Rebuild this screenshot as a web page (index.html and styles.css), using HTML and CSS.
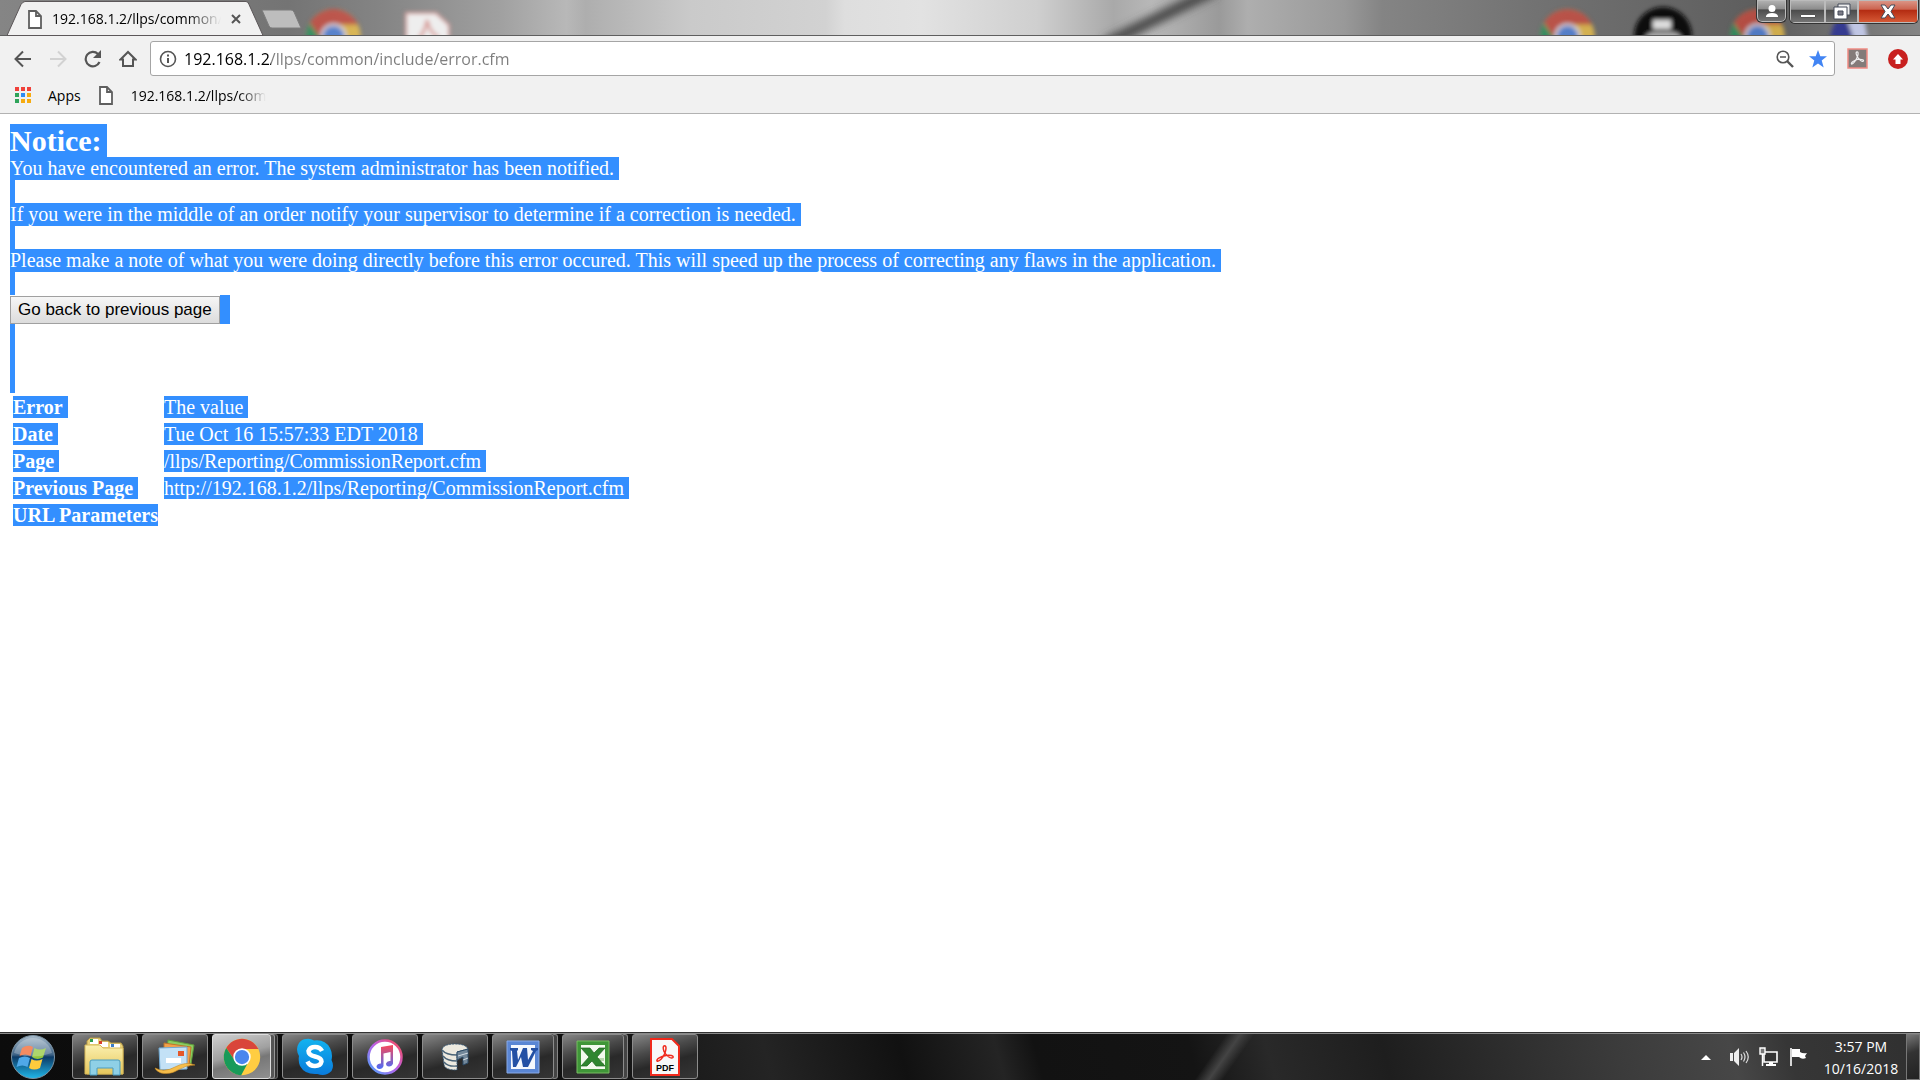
FILE: index.html
```html
<!DOCTYPE html>
<html lang="en">
<head>
    <meta charset="UTF-8">
    <meta name="viewport" content="width=device-width, initial-scale=1.0">
    <title>Error</title>
    <link rel="stylesheet" href="styles.css">
</head>
<body>

    <!-- Shared shapes -->
    <svg width="0" height="0" class="defs">
        <defs>
            <symbol id="page" viewBox="0 0 14 19">
                <path d="M1 1h7l5 5v12H1z M8 1v5h5" fill="#fff" stroke="#5f5f5f" stroke-width="1.8"/>
            </symbol>
            <symbol id="chrome" viewBox="0 0 48 48">
                <circle cx="24" cy="24" r="23" fill="#ffcd42"/>
                <path d="M4.1 12.5A23 23 0 0 1 43.9 12.500L44.800 14H24A10 10 0 0 0 15.300 29z" fill="#d9453a"/>
                <path d="M4.100 12.500A23 23 0 0 0 23 47L32.700 29A10 10 0 0 1 15.300 29z" fill="#189a59"/>
                <circle cx="24" cy="24" r="11" fill="#fff"/>
                <circle cx="24" cy="24" r="9" fill="#4a86ee"/>
            </symbol>
            <linearGradient id="orb" x1="0" y1="0" x2="0" y2="1">
                <stop offset="0" stop-color="#a9bccb"/>
                <stop offset=".45" stop-color="#3c6286"/>
                <stop offset=".5" stop-color="#0c3a66"/>
                <stop offset="1" stop-color="#20b8ea"/>
            </linearGradient>
            <linearGradient id="folder" x1="0" y1="0" x2="0" y2="1">
                <stop offset="0" stop-color="#fbf0ae"/>
                <stop offset="1" stop-color="#e5c65c"/>
            </linearGradient>
            <linearGradient id="sky" x1="0" y1="0" x2="0" y2="1">
                <stop offset="0" stop-color="#12b3f0"/>
                <stop offset="1" stop-color="#0a7bdc"/>
            </linearGradient>
            <linearGradient id="tunes" x1="0" y1="1" x2="1" y2="0">
                <stop offset="0" stop-color="#4aa8ff"/>
                <stop offset=".5" stop-color="#b860e8"/>
                <stop offset="1" stop-color="#ff4a50"/>
            </linearGradient>
            <linearGradient id="note" x1="0" y1="0" x2="0" y2="1">
                <stop offset="0" stop-color="#fa4858"/>
                <stop offset="1" stop-color="#4c6cf8"/>
            </linearGradient>
            <linearGradient id="wall" gradientUnits="userSpaceOnUse" x1="0" y1="0" x2="1920" y2="0">
                <stop offset="0" stop-color="#858585"/>
                <stop offset=".15" stop-color="#747474"/>
                <stop offset=".2" stop-color="#858585"/>
                <stop offset=".26" stop-color="#a0a0a0"/>
                <stop offset=".295" stop-color="#b8b8b8"/>
                <stop offset=".305" stop-color="#aeaeae"/>
                <stop offset=".36" stop-color="#cacaca"/>
                <stop offset=".43" stop-color="#d2d2d2"/>
                <stop offset=".44" stop-color="#dedede"/>
                <stop offset=".48" stop-color="#e2e2e2"/>
                <stop offset=".54" stop-color="#cfcfcf"/>
                <stop offset=".58" stop-color="#a9a9a9"/>
                <stop offset=".6" stop-color="#b8b8b8"/>
                <stop offset=".635" stop-color="#9a9a9a"/>
                <stop offset=".65" stop-color="#aeaeae"/>
                <stop offset=".7" stop-color="#999"/>
                <stop offset=".72" stop-color="#848484"/>
                <stop offset=".8" stop-color="#727272"/>
                <stop offset=".92" stop-color="#5d5d5d"/>
                <stop offset="1" stop-color="#858585"/>
            </linearGradient>
            <filter id="soft" x="-20%" y="-20%" width="140%" height="140%"><feGaussianBlur stdDeviation="2"/></filter>
            <filter id="softer" x="-40%" y="-40%" width="180%" height="180%"><feGaussianBlur stdDeviation="4"/></filter>
        </defs>
    </svg>

    <!-- Title bar with the tab -->
    <header class="titlebar">
        <svg class="wallpaper" viewBox="0 0 1920 35" preserveAspectRatio="none">
            <rect width="1920" height="35" fill="url(#wall)"/>
            <path d="M1215-10L1105 44" stroke="#444" stroke-width="11" filter="url(#softer)"/>
            <g filter="url(#soft)">
                <g opacity=".7">
                    <use href="#chrome" x="305" y="8" width="57" height="57"/>
                    <use href="#chrome" x="1539" y="8" width="57" height="57"/>
                    <use href="#chrome" x="1729" y="8" width="57" height="57"/>
                </g>
                <path d="M406 50V13h30l13 12v25z" fill="#eee" stroke="#d99a96" stroke-width="2"/>
                <path d="M418 40q8-10 9-20q3 14 12 17" fill="none" stroke="#d89c98" stroke-width="3"/>
                <circle cx="1663" cy="36" r="29" fill="#111"/>
                <rect x="1653" y="20" width="18" height="9" fill="#ddd"/>
                <path d="M1644 40q3-8 10-8h18q8 0 10 8z" fill="#aaa"/>
                <path d="M1830 40q2-20 14-25l10 25z" fill="#343a90"/>
                <path d="M1846 16l18 2 4 22h-14z" fill="#c0c6e4"/>
            </g>
        </svg>
        <div class="tab">
            <svg class="tab-shape" viewBox="0 0 258 35"><path d="M0 35L14 4q2-3 4-3h221q2 0 3 3l14 31z" fill="#f1f1f1" stroke="#5c5759"/></svg>
            <svg class="tab-icon" width="14" height="19"><use href="#page"/></svg>
            <span class="tab-title">192.168.1.2/llps/common/</span>
            <button type="button" class="tab-close" aria-label="Close tab">
                <svg width="10" height="10"><path d="M1 1l8 8M9 1L1 9" stroke="#555" stroke-width="2"/></svg>
            </button>
        </div>
        <button type="button" class="new-tab" aria-label="New tab">
            <svg width="42" height="20"><path d="M1 1h29q2 0 3 2l7 16H11q-2 0-3-2z" fill="#bdbdbd" stroke="#7d7d7d"/></svg>
        </button>
        <div class="window-buttons">
            <button type="button" class="win user" aria-label="Profile">
                <svg width="12" height="13"><path d="M6 0a3.500 3.500 0 1 1 0 7a3.500 3.500 0 1 1 0-7M0 12V11q1-3 6-3t6 3v1z" fill="#fff"/></svg>
            </button>
            <div class="win-group">
                <button type="button" class="win minimize" aria-label="Minimize">
                    <svg width="16" height="12"><path d="M.5 8.500h15v3H.5z" fill="#fff" stroke="#555"/></svg>
                </button>
                <button type="button" class="win restore" aria-label="Restore">
                    <svg width="18" height="17"><path d="M5 1h12v11H5z" fill="#eee" stroke="#444a58"/><path d="M1 4h13v12H1z" fill="#fff" stroke="#444a58"/><path d="M5 8h5v4H5z" fill="#7c7c88" stroke="#444a58"/></svg>
                </button>
                <button type="button" class="win close" aria-label="Close">
                    <svg width="16" height="15"><path d="M1 1h4l3 4 3-4h4l-4 6.500 4 6.500h-4l-3-4-3 4H1l4-6.500z" fill="#fff" stroke="#444a58"/></svg>
                </button>
            </div>
        </div>
    </header>

    <!-- Address bar -->
    <nav class="toolbar">
        <button type="button" class="tool" aria-label="Back">
            <svg width="18" height="18"><path d="M17 9H2M9 1.500L1.500 9 9 16.500" fill="none" stroke="#555" stroke-width="2"/></svg>
        </button>
        <button type="button" class="tool" aria-label="Forward">
            <svg width="18" height="18"><path d="M1 9h15M9 1.500L16.500 9 9 16.500" fill="none" stroke="#d2d2d2" stroke-width="2"/></svg>
        </button>
        <button type="button" class="tool" aria-label="Reload">
            <svg width="18" height="18"><path d="M15.500 12A7.200 7.200 0 1 1 14 4" fill="none" stroke="#555" stroke-width="2.200"/><path d="M17 0v8H9z" fill="#555"/></svg>
        </button>
        <button type="button" class="tool" aria-label="Home">
            <svg width="18" height="18"><path d="M1.500 9.500L9 2l7.500 7.500H14V16H4V9.500z" fill="none" stroke="#555" stroke-width="2"/></svg>
        </button>
        <div class="omnibox">
            <svg width="18" height="18"><circle cx="9" cy="9" r="7.500" fill="none" stroke="#555" stroke-width="1.600"/><path d="M9 8v5M9 4.500v2" stroke="#555" stroke-width="2"/></svg>
            <input type="text" class="url" aria-label="Address" value="192.168.1.2/llps/common/include/error.cfm">
            <svg width="18" height="18"><circle cx="7" cy="7" r="5.800" fill="none" stroke="#555" stroke-width="1.600"/><path d="M4 7h6" stroke="#555" stroke-width="1.500"/><path d="M11 11l6 6" stroke="#555" stroke-width="2.400"/></svg>
            <svg width="18" height="18"><path d="M9 0l2.300 6.300H18l-5.300 4.200 2 7L9 13.500l-5.700 4 2-7L0 6.300h6.700z" fill="#4285f4"/></svg>
        </div>
        <svg width="21" height="21"><path d="M1 1h19v19H1z" fill="#837b79" stroke="#f08c84" stroke-width="1.500"/><path d="M9.500 4c2-1 2 2 .8 5C9 12.500 6 16.500 4.500 16c-1-1 3-4 6-4.500s6.500 0 6 1.500c-1 1.500-5-1.500-6.500-5C9 6 9 4.500 9.500 4z" fill="none" stroke="#eee" stroke-width="1.200"/></svg>
        <svg width="20" height="20"><circle cx="10" cy="10" r="10" fill="#c8201f"/><path d="M10 5l5 5.500h-2.500V15h-5v-4.500H5z" fill="#fff"/></svg>
    </nav>

    <!-- Bookmarks bar -->
    <nav class="bookmarks">
        <a href="#" class="bookmark">
            <svg width="17" height="17">
                <path d="M0 0h4v4H0zM6 0h4v4H6zM12 0h4v4h-4z" fill="#f0413a"/>
                <path d="M0 6h4v4H0zM0 12h4v4H0z" fill="#2fa45a"/>
                <path d="M6 6h4v4H6z" fill="#2f8cf5"/>
                <path d="M12 6h4v4h-4zM6 12h4v4H6zM12 12h4v4h-4z" fill="#f6ab10"/>
            </svg>
            Apps
        </a>
        <a href="#" class="bookmark saved">
            <svg width="14" height="19"><use href="#page"/></svg>
            <span class="bookmark-title">192.168.1.2/llps/com</span>
        </a>
    </nav>

    <!-- Error page, all of it selected -->
    <main class="content">
        <h2 class="selected">Notice:</h2>
        <p class="selected">You have encountered an error. The system administrator has been notified.</p>
        <div class="selected blank"></div>
        <p class="selected">If you were in the middle of an order notify your supervisor to determine if a correction is needed.</p>
        <div class="selected blank"></div>
        <p class="selected">Please make a note of what you were doing directly before this error occured. This will speed up the process of correcting any flaws in the application.</p>
        <div class="selected blank"></div>
        <div class="button-row">
            <button type="button" class="go-back">Go back to previous page</button>
        </div>
        <div class="selected blank"></div>
        <div class="selected blank"></div>
        <div class="selected blank"></div>

        <table class="details">
            <tr><th scope="row"><span>Error</span></th><td><span>The value</span></td></tr>
            <tr><th scope="row"><span>Date</span></th><td><span>Tue Oct 16 15:57:33 EDT 2018</span></td></tr>
            <tr><th scope="row"><span>Page</span></th><td><span>/llps/Reporting/CommissionReport.cfm</span></td></tr>
            <tr><th scope="row"><span>Previous Page</span></th><td><span>http://192.168.1.2/llps/Reporting/CommissionReport.cfm</span></td></tr>
            <tr><th scope="row"><span class="last">URL Parameters</span></th><td></td></tr>
        </table>
    </main>

    <!-- Taskbar -->
    <footer class="taskbar">
        <button type="button" class="start" aria-label="Start">
            <svg width="46" height="46" viewBox="0 0 46 46">
                <circle cx="23" cy="23" r="21.500" fill="url(#orb)" stroke="#7c92a2"/>
                <path d="M12 14q6-4 11-1l-2.500 9q-5-3-11 0z" fill="#f0652c"/>
                <path d="M24.500 14q5 3 11.500 0l-3 9.500q-6 3-11-.500z" fill="#93c83c"/>
                <path d="M9 24q6-3 11 0l-2.500 9q-5-3-11 0z" fill="#4fa8e8"/>
                <path d="M21.500 25q5 3 11 0L30 34q-6 3-11 0z" fill="#fccb3c"/>
                <path d="M4 19a19.500 19.500 0 0 1 38 0q-19 7-38 0z" fill="#fff" opacity=".25"/>
            </svg>
        </button>
        <div class="tasks">
            <button type="button" class="task" aria-label="Explorer">
                <svg width="42" height="40" viewBox="0 0 42 40">
                    <path d="M3 4l3-3h10l2 3h6l3 2h10l2 3v28H3z" fill="#e9d27a" stroke="#b79a48"/>
                    <path d="M6 2h8v5H6zM15 5h9v5h-9zM26 7h10v5H26z" fill="#fff"/>
                    <path d="M6 2h3v3H6z" fill="#2c9c4a"/><path d="M15 4h3v3h-3z" fill="#d8402c"/><path d="M27 7h3v3h-3z" fill="#3a7cc8"/>
                    <path d="M1 8h15l3 3h20v26H1z" fill="url(#folder)" stroke="#d6b858"/>
                    <path d="M6 38V25q0-2 2-2h26q2 0 2 2v13h-7v-7H13v7z" fill="#8fd0e6" stroke="#4a9cc0"/>
                </svg>
            </button>
            <button type="button" class="task" aria-label="Mail">
                <svg width="42" height="36" viewBox="0 0 42 36">
                    <path d="M14 1l26 5-3 19-25-4z" fill="#8bcc60" stroke="#5e9c3c"/>
                    <path d="M10 4l27 4-2 19-25-3z" fill="#f2a04a" stroke="#bc762c"/>
                    <path d="M5 9l28-1v22l-27 1z" fill="#c3e1f6" stroke="#6fa8d2"/>
                    <path d="M24 12h6v5h-6z" fill="#e4582a"/><path d="M12 19h15v5H12z" fill="#fff"/>
                    <path d="M1 29q9 5 20-1t20-2q-9 0-17 5t-17 3q-5-2-6-5z" fill="#f5bd4a" stroke="#c78a24" stroke-width=".6"/>
                </svg>
            </button>
            <button type="button" class="task active stacked" aria-label="Chrome">
                <svg width="38" height="38"><use href="#chrome"/></svg>
            </button>
            <button type="button" class="task" aria-label="Skype">
                <svg width="38" height="38" viewBox="0 0 38 38">
                    <path d="M10 1q4-1 8 1.500Q29 1 34 10q3 6 1.500 12q3 6 0 11q-6 6-14 3Q9 37 4 28Q2 23 3 18Q-1 11 3 5Q6 1 10 1z" fill="url(#sky)"/>
                    <path d="M26 13q-2-4-7-4t-6.500 4q0 4 6.500 5.500t6.500 5q-1 4.500-6.500 4.500t-7.500-4.500" fill="none" stroke="#fff" stroke-width="4.500"/>
                </svg>
            </button>
            <button type="button" class="task" aria-label="iTunes">
                <svg width="36" height="36" viewBox="0 0 36 36">
                    <circle cx="18" cy="18" r="16.500" fill="#fff" stroke="url(#tunes)" stroke-width="2.500"/>
                    <path d="M14 8l12-2v18.500q-1 3-4 3t-3-3q1-3 4.500-2.500V13l-7 1.500V27q-1 3-4 3t-3-3q1-3 4.500-2.500z" fill="url(#note)"/>
                </svg>
            </button>
            <button type="button" class="task" aria-label="Database">
                <svg width="28" height="28" viewBox="0 0 28 28">
                    <path d="M1 6Q3 1 14 1t13 5L16 9v18Q3 27 3 21z" fill="#ece9df" stroke="#385a78" stroke-dasharray="2 1"/>
                    <path d="M1 7q4 5 15 5M2 13q4 5 14 5M3 19q4 5 13 4" fill="none" stroke="#4a6478" stroke-width="1.400"/>
                    <path d="M16 9l11-3v14l-5 2v-8l-6 3z" fill="#73889a" stroke="#2c4a66"/>
                    <path d="M17 13l10-3M22 17l5-2" stroke="#d3dbe2"/>
                </svg>
            </button>
            <button type="button" class="task stacked" aria-label="Word">
                <svg width="34" height="34" viewBox="0 0 34 34">
                    <path d="M1 1h32v32H1z" fill="#5a86d4" stroke="#88aae8"/><path d="M5 5h24v24H5z" fill="#f4f7fd"/>
                    <path d="M4 8h8v2l-1 1 1 9 5-12h4l1 12 5-9-2-1V8h7v2l-2 1-8 16h-5l-2-10-5 10H7L6 11 4 10z" fill="#2450a4"/>
                </svg>
            </button>
            <button type="button" class="task stacked" aria-label="Excel">
                <svg width="34" height="34" viewBox="0 0 34 34">
                    <path d="M1 1h32v32H1z" fill="#3f9638" stroke="#78bd62"/><path d="M5 5h24v24H5z" fill="#f2faee"/>
                    <path d="M20 23h8v3h-8zM21 18h7v3h-7z" fill="#b9d9ae"/>
                    <path d="M5 8h9l4 5 5-5h6l-8 9 8 9h-9l-4-5-5 5H5l8-9z" fill="#2f8630" stroke="#1f6420" stroke-width=".7"/>
                </svg>
            </button>
            <button type="button" class="task" aria-label="Acrobat Reader">
                <svg width="30" height="38" viewBox="0 0 30 38">
                    <path d="M1 1h21l7 7v29H1z" fill="#f8f8f8" stroke="#f02a1c" stroke-width="2"/>
                    <path d="M14 8c3-1 2 4 1 7-2 5-6 9-8 8-1-2 5-5 9-5.500s8 0 7 2c-2 2-7-2-9-6-1-3-1-5 0-5.500z" fill="none" stroke="#f02a1c" stroke-width="1.500"/>
                    <text x="15" y="33" text-anchor="middle" class="pdf">PDF</text>
                </svg>
            </button>
        </div>
        <div class="tray">
            <svg width="10" height="6"><path d="M0 6l5-5 5 5z" fill="#fff"/></svg>
            <svg width="20" height="20"><path d="M1 6h3v8H1zM5 6l5-5v18l-5-5z" fill="#eee"/><path d="M12 7q2 3 0 6M14.500 5.500q3 4.500 0 9M17 4q4.500 6 0 12" fill="none" stroke="#ddd" stroke-width="1.200"/></svg>
            <svg width="20" height="20"><path d="M5 5h13v10H5z" fill="#333" stroke="#fff" stroke-width="1.600"/><path d="M10 15h4v2h3v2H7v-2h3z" fill="#fff"/><path d="M1 1h5v6H1z" fill="#777" stroke="#fff" stroke-width="1.400"/><path d="M3.500 7v12" stroke="#fff" stroke-width="1.500"/></svg>
            <svg width="20" height="20"><path d="M2 1v18" stroke="#fff" stroke-width="1.600"/><path d="M3 2h8v3q3 2 7 1l-2 3 1 2q-4 2-7-1H3z" fill="#fff"/></svg>
        </div>
        <div class="clock">
            <div>3:57 PM</div>
            <div>10/16/2018</div>
        </div>
        <button type="button" class="show-desktop" aria-label="Show desktop"></button>
    </footer>

</body>
</html>
```
FILE: styles.css
```css
* { box-sizing: border-box; }

body {
    margin: 0;
    min-height: 100vh;
    display: flex;
    flex-direction: column;
    background: #fff;
    font-family: "Open Sans", "Noto Sans", sans-serif;
    font-size: 14px;
    color: #000;
}

svg { display: block; flex: none; }
button { margin: 0; padding: 0; border: 0; background: none; cursor: pointer; }
.defs { position: absolute; }

/* Title bar */
.titlebar {
    position: relative;
    height: 36px;
    display: flex;
    align-items: flex-start;
    padding: 0 1px 0 7px;
    border-bottom: 1px solid #5f5f5f;
}

.wallpaper {
    position: absolute;
    top: 0;
    left: 0;
    width: 100%;
    height: 35px;
}

.tab {
    position: relative;
    width: 258px;
    height: 36px;
    display: flex;
    align-items: center;
    padding: 2px 24px 0 21px;
}

.tab-shape {
    position: absolute;
    top: 0;
    left: 0;
    width: 258px;
    height: 36px;
}

.tab-icon, .tab-close { position: relative; }

.tab-title {
    position: relative;
    flex: 1;
    margin: 0 10px;
    white-space: nowrap;
    overflow: hidden;
    line-height: 20px;
    -webkit-mask-image: linear-gradient(to right, #000 80%, transparent);
    mask-image: linear-gradient(to right, #000 80%, transparent);
}

.new-tab { position: relative; margin-top: 9px; margin-left: -4px; }

.window-buttons {
    position: relative;
    display: flex;
    gap: 2px;
    margin-left: auto;
}

.win {
    height: 23px;
    display: flex;
    align-items: center;
    justify-content: center;
    background: linear-gradient(#b4b4b4, #8c8c8c 40%, #4c4c4c 45%, #777);
    box-shadow: inset 0 0 0 1px #bbb;
}

.user { width: 31px; border: 1px solid #333; border-top: 0; border-radius: 0 0 6px 6px; }

.win-group {
    display: flex;
    border: 1px solid #333;
    border-top: 0;
    border-radius: 0 0 6px 6px;
    overflow: hidden;
}

.minimize { width: 35px; }
.restore { width: 33px; }
.close { width: 60px; background: linear-gradient(#dc9a8c, #cc6450 40%, #b42c12 45%, #d85c38); }

/* Toolbar */
.toolbar {
    display: flex;
    align-items: center;
    gap: 17px;
    padding: 5px 12px 5px 14px;
    background: #f1f1f1;
}

.tool { width: 18px; height: 18px; }
.toolbar > svg:last-child { margin-left: 3px; }

.omnibox {
    flex: 1;
    height: 35px;
    margin: 0 -5px 0 -4px;
    display: flex;
    align-items: center;
    gap: 15px;
    padding: 0 7px 0 8px;
    background: #fff;
    border: 1px solid #a5a5a5;
    border-radius: 3px;
}

.url {
    flex: 1;
    min-width: 0;
    height: 30px;
    margin-left: -8px;
    padding: 0;
    border: 0;
    outline: 0;
    font-family: inherit;
    font-size: 16px;
    /* host in black, path in grey */
    color: transparent;
    background: linear-gradient(to right, #000 87px, #7d7d7d 87px);
    -webkit-background-clip: text;
    background-clip: text;
}

/* Bookmarks bar */
.bookmarks {
    display: flex;
    align-items: center;
    gap: 18px;
    height: 33px;
    padding: 0 15px 4px;
    background: #f1f1f1;
    border-bottom: 1px solid #b2b2b2;
}

.bookmark {
    display: flex;
    align-items: center;
    gap: 16px;
    color: #000;
    text-decoration: none;
}

.saved { gap: 18px; }

.bookmark-title {
    white-space: nowrap;
    -webkit-mask-image: linear-gradient(to right, #000 80%, transparent);
    mask-image: linear-gradient(to right, #000 80%, transparent);
}

/* Error page */
.content {
    flex: 1;
    padding: 10px;
    font-family: "Liberation Serif", "Times New Roman", serif;
    font-size: 20px;
    line-height: 23px;
}

.selected {
    width: fit-content;
    margin: 0;
    padding-right: 5px;
    background: #338fff;
    color: #fff;
}

h2.selected { font-size: 30px; line-height: 33px; }
.blank { height: 23px; }

.button-row {
    width: fit-content;
    padding: 1px 10px 0 0;
    background: linear-gradient(#338fff, #338fff) right / 10px 100% no-repeat;
}

.go-back {
    display: block;
    height: 28px;
    padding: 0 7px;
    border: 1px solid #a0a0a0;
    background: linear-gradient(#f6f6f6, #dcdcdc);
    font-family: "Liberation Sans", Arial, sans-serif;
    font-size: 17px;
}

.details { border-spacing: 2px 1px; line-height: 22px; }
.details th, .details td { height: 26px; padding: 2px 1px; text-align: left; }
.details th { padding-right: 3px; }

.details span {
    display: block;
    width: fit-content;
    padding-right: 5px;
    background: #338fff;
    color: #fff;
}

.details .last { padding-right: 0; }

/* Taskbar */
.taskbar {
    height: 48px;
    display: flex;
    align-items: stretch;
    border-top: 1px solid #333;
    box-shadow: inset 0 1px #8a8a8a;
    background:
        linear-gradient(125deg, transparent 40%, #444 50%, transparent 60%) 1170px 0 / 110px 100% no-repeat,
        linear-gradient(75deg, #0c0c0c, #101010 30%, #242424 40%, #111 47%, #242424 52%, #121212 54%, #141414 62%, #292929 66%, #1e1e1e 72%, #3b3b3b 84%, #474747 90%, #363636 93%, #303030);
}

.start { width: 72px; padding-left: 10px; }

.tasks { display: flex; gap: 4px; padding: 1px 0; }

.task {
    width: 66px;
    display: flex;
    align-items: center;
    justify-content: center;
    border: 1px solid #8c8c8c;
    border-radius: 3px;
    background: linear-gradient(165deg, #858585, #4a4a4a 35%, #292929 60%, #353535);
}

.active { background: linear-gradient(165deg, #d0d0d0, #a0a0a0 45%, #777 60%, #909090); border-color: #ddd; }

/* more than one window open */
.stacked { width: 62px; margin-right: 4px; box-shadow: 4px 0 0 -1px #444, 4px 0 #858585; }
.active.stacked { width: 59px; margin-right: 7px; box-shadow: 4px 0 0 -1px #555, 4px 0 #999, 7px 0 0 -1px #333, 7px 0 #666; }

.pdf { font-family: "Liberation Sans", Arial, sans-serif; font-size: 9px; font-weight: bold; }

.tray { display: flex; align-items: center; gap: 10px; margin: 0 7px 0 auto; }
.tray svg:first-child { margin-right: 8px; }

.clock {
    width: 90px;
    padding-top: 3px;
    line-height: 22px;
    text-align: center;
    color: #fff;
}

.show-desktop {
    width: 14px;
    margin-top: 1px;
    border: 1px solid #777;
    background: linear-gradient(160deg, #777, #333 40%, #222);
}
```
